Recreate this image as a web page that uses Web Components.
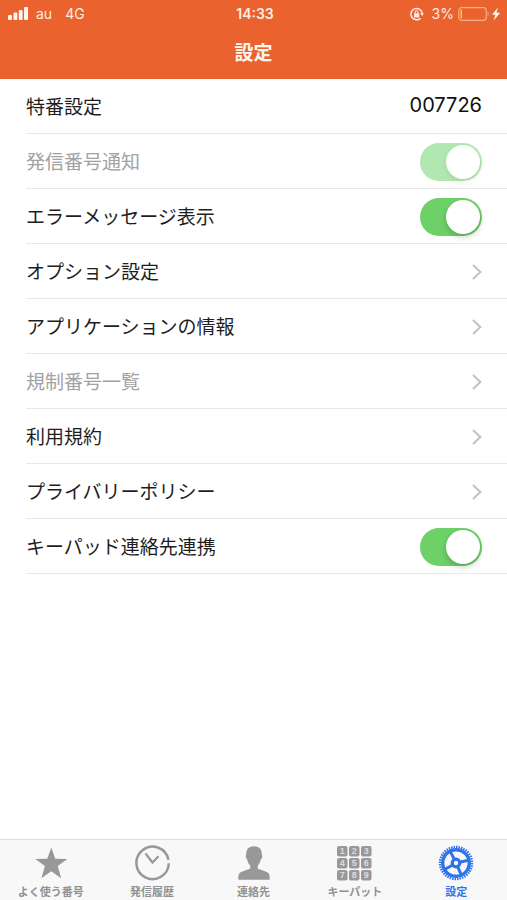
<!DOCTYPE html>
<html lang="ja">
<head>
<meta charset="utf-8">
<meta name="viewport" content="width=device-width, initial-scale=1">
<title>設定</title>
<style>
html, body { margin: 0; height: 100%; }
body { font-family: Inter, "Noto Sans CJK JP", sans-serif; color: #1e1e1e; background: #fff; }
</style>
</head>
<body>
<settings-app></settings-app>
<script>
const define = (name, html, setup) => customElements.define(name, class extends HTMLElement {
  connectedCallback() {
    if (this.shadowRoot) return;
    const root = this.attachShadow({ mode: 'open' });
    const template = document.createElement('template');
    template.innerHTML = html;
    root.append(template.content.cloneNode(true));
    if (setup) setup(this, root);
  }
});

define('status-bar', `
<style>
:host { display: grid; grid-template-columns: 1fr auto 1fr; align-items: center; height: 27px; padding: 0 5px 0 8px; font-size: 14px; line-height: 20px; color: #ffece0; }
div { display: flex; align-items: center; }
.net { margin-left: 13px; }
.carrier { margin-left: 8px; }
time { font-weight: 600; }
.right { justify-content: flex-end; }
.pct { margin: 0 4px 0 8px; }
svg { display: block; flex: none; }
</style>
<div>
  <svg width="20" height="13" viewBox="0 0 20 13" fill="#fff6ee" aria-hidden="true"><rect y="8" width="4" height="5" rx="1"/><rect x="5.5" y="5.5" width="3.8" height="7.5" rx="1"/><rect x="10.8" y="3" width="3.8" height="10" rx="1"/><rect x="16" width="4" height="13" rx="1"/></svg>
  <span class="carrier">au</span><span class="net">4G</span>
</div>
<time>14:33</time>
<div class="right">
  <svg width="14" height="14" viewBox="0 0 14 14" fill="none" stroke="currentColor" stroke-width="1.5" aria-hidden="true"><path d="M10.6 11.2A5.7 5.7 0 1 1 12.2 6"/><path d="M10 6.2h4l-1.900 2.800z" fill="currentColor" stroke="none"/><rect x="4" y="6.200" width="5.200" height="4.200" rx=".5" fill="currentColor" stroke="none"/><path d="M5.200 6.600V5.200a1.400 1.400 0 0 1 2.800 0v1.400" stroke-width="1.100"/></svg>
  <span class="pct">3%</span>
  <svg width="32" height="14" viewBox="0 0 32 14" aria-hidden="true"><rect x=".7" y=".7" width="27.6" height="12.6" rx="3" fill="none" stroke="#f7ad88" stroke-width="1.2"/><path d="M2.500 3.500q0-1 1.400-1v9q-1.400 0-1.400-1z" fill="#ffd44a"/><path d="M29.700 4.600q2 2.400 0 4.800z" fill="#f7ad88"/></svg>
  <svg width="12" height="14" viewBox="0 0 12 14" fill="#fff6ee" aria-hidden="true"><path d="M7.900.5 2 7.800h3.300L3.700 13.500l6.500-7.700H6.500z"/></svg>
</div>`);

define('nav-header', `
<style>
:host { display: block; flex: none; background: #ea622d; }
h1 { margin: 0; height: 52px; box-sizing: border-box; padding-top: 13px; text-align: center; font-size: 19px; line-height: 28px; font-weight: 700; color: #fff8f2; }
</style>
<status-bar></status-bar>
<h1><slot></slot></h1>`);

define('ios-switch', `
<style>
:host { display: block; flex: none; }
input { appearance: none; display: block; box-sizing: border-box; margin: 0; width: 62px; height: 38px; padding: 2px; border-radius: 19px; background: #e4e4e4; }
input::before { content: ""; display: block; width: 34px; height: 34px; border-radius: 50%; background: #fff; box-shadow: 0 3px 6px #0003; }
input:checked { background: #6dd168; }
input:checked::before { margin-left: auto; }
input:disabled { background: #b1e7b0; }
input:disabled::before { box-shadow: 0 3px 6px #0001; }
</style>
<input type="checkbox" role="switch" checked>`, (host, root) => {
  const input = root.querySelector('input');
  input.disabled = host.hasAttribute('disabled');
  input.setAttribute('aria-label', host.getAttribute('label'));
});

define('settings-row', `
<style>
:host { display: block; padding-left: 26px; }
.row { display: flex; align-items: center; justify-content: space-between; box-sizing: border-box; height: 55px; padding: 1px 25px 0 0; border-bottom: 1px solid #e9e9e9; font-size: 19px; line-height: 28px; color: inherit; text-decoration: none; }
:host([muted]) .text { color: #a2a2a2; }
.text { white-space: nowrap; padding-top: 2px; }
input { width: 100px; padding: 0; margin: 0 0 4px; border: 0; background: none; text-align: right; font: inherit; font-size: 20px; color: #111; }
svg { display: block; flex: none; }
</style>`, (host, root) => {
  const kind = host.getAttribute('kind');
  const label = host.getAttribute('label');
  const row = document.createElement(kind === 'link' ? 'a' : kind === 'value' ? 'label' : 'div');
  row.className = 'row';
  if (kind === 'link') row.href = '#';
  row.innerHTML = `<span class="text">${label}</span>` + {
    link: '<svg width="10" height="16" viewBox="0 0 10 16" fill="none" stroke="#c4c4c6" stroke-width="2.2" aria-hidden="true"><path d="m1 1 7.3 7L1 15"/></svg>',
    value: `<input type="text" value="${host.getAttribute('value')}">`,
    switch: `<ios-switch label="${label}"${host.hasAttribute('muted') ? ' disabled' : ''}></ios-switch>`
  }[kind];
  root.append(row);
});

define('tab-item', `
<style>
:host { display: block; flex: 1 1 0; min-width: 0; color: #929292; }
:host([active]) { color: #2e73ea; }
a { display: flex; flex-direction: column; align-items: center; gap: 3px; padding-top: 5px; color: inherit; text-decoration: none; font-size: 11px; line-height: 16px; font-weight: 700; white-space: nowrap; }
</style>
<a href="#"><slot name="icon"></slot><span><slot></slot></span></a>`, (host, root) => {
  if (host.hasAttribute('active')) root.querySelector('a').setAttribute('aria-current', 'page');
});

define('tab-bar', `
<style>
:host { display: block; flex: none; border-top: 1px solid #dedede; background: #f8f8f8; }
nav { display: flex; height: 60px; }
svg { display: block; width: 36px; height: 36px; }
.keys { font: 700 9px/10px "Liberation Sans", sans-serif; }
</style>
<nav>
  <tab-item><svg slot="icon" viewBox="0 0 36 36" fill="#989898" aria-hidden="true"><path d="m18.300 2.500 4 11.300 12 .1-9.600 7.200 3.500 12.200-9.900-7-9.900 7 3.500-12.200-9.600-7.200 12-.1z"/></svg>よく使う番号</tab-item>
  <tab-item><svg slot="icon" viewBox="0 0 36 36" fill="none" stroke="#989898" stroke-width="2.500" aria-hidden="true"><path d="M34.500 14.800A16.200 16.200 0 1 0 34.800 18.200"/><path d="m11.500 8.500 7 9 6-6.200" stroke-width="2.200"/></svg>発信履歴</tab-item>
  <tab-item><svg slot="icon" viewBox="0 0 36 36" fill="#989898" aria-hidden="true"><path d="M18 1.200c5 0 8 3 7.800 8.200 1.100 1.400.4 4.200-.9 4.800-.6 2.900-1.700 5-3.100 6.300v3.100c3.800 2.200 9.200 2.400 11 5.200.9 1.500.9 3.300.9 6H2.300c0-2.700 0-4.500.9-6 1.800-2.800 7.200-3 11-5.200v-3.100c-1.400-1.300-2.500-3.400-3.100-6.300-1.300-.6-2-3.400-.9-4.800C10 4.200 13 1.200 18 1.200z"/></svg>連絡先</tab-item>
  <tab-item><svg slot="icon" class="keys" viewBox="0 0 36 36" text-anchor="middle" aria-hidden="true"></svg>キーパット</tab-item>
  <tab-item active><svg slot="icon" viewBox="0 0 36 36" fill="none" stroke="#2e73ea" aria-hidden="true"><circle cx="18" cy="18" r="16" stroke-width="2.400" pathLength="80" stroke-dasharray="1.200 .8"/><circle cx="18" cy="18" r="13.300" stroke-width="3.400"/><circle cx="18" cy="18" r="3.800" stroke-width="3.200"/><g class="spokes" stroke-width="3"></g></svg>設定</tab-item>
</nav>`, (host, root) => {
  let keys = '';
  for (let i = 0; i < 9; i++) {
    const x = (i % 3) * 12, y = 1 + Math.floor(i / 3) * 12;
    keys += `<rect x="${x}" y="${y}" width="10.500" height="10.500" rx="2" fill="#989898"/><text x="${x + 5.2}" y="${y + 8.400}" fill="#dcdcdc">${i + 1}</text>`;
  }
  root.querySelector('.keys').innerHTML = keys;
  root.querySelector('.spokes').innerHTML = [-116, -12, 66, 150].map(a => `<path d="M22.500 18H31" transform="rotate(${a} 18 18)"/>`).join('');
});

define('settings-app', `
<style>
:host { display: flex; flex-direction: column; min-height: 100%; }
main { flex: 1; }
</style>
<nav-header>設定</nav-header>
<main>
  <settings-row kind="value" label="特番設定" value="007726"></settings-row>
  <settings-row kind="switch" label="発信番号通知" muted></settings-row>
  <settings-row kind="switch" label="エラーメッセージ表示"></settings-row>
  <settings-row kind="link" label="オプション設定"></settings-row>
  <settings-row kind="link" label="アプリケーションの情報"></settings-row>
  <settings-row kind="link" label="規制番号一覧" muted></settings-row>
  <settings-row kind="link" label="利用規約"></settings-row>
  <settings-row kind="link" label="プライバリーポリシー"></settings-row>
  <settings-row kind="switch" label="キーパッド連絡先連携"></settings-row>
</main>
<tab-bar></tab-bar>`);
</script>
</body>
</html>
